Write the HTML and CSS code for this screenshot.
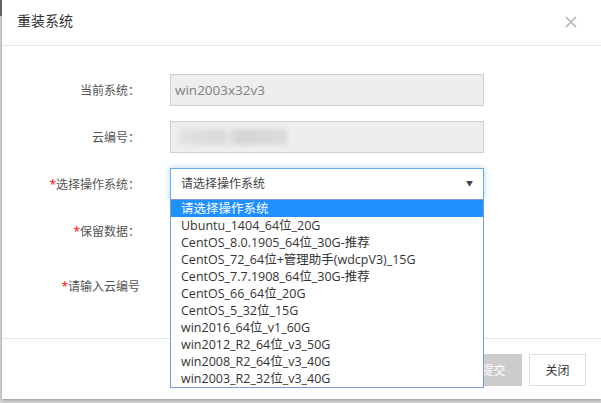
FILE: index.html
```html
<!DOCTYPE html>
<html>
    <head>
        <meta charset="utf-8">
        <title>重装系统</title>
        <link rel="stylesheet" href="styles.css">
    </head>
    <body>
        <div class="modal">
            <div class="modal-header">
                <span class="modal-title">重装系统</span>
                <span class="close">
                    <svg width="12" height="12" viewBox="0 0 12 12"><path d="M1 1L11 11M11 1L1 11" stroke="#b3b3b3" stroke-width="1.6"/></svg>
                </span>
            </div>
            <div class="modal-body">
                <div class="row">
                    <label class="lbl">当前系统：</label>
                    <div class="ctrl input readonly">win2003x32v3</div>
                </div>
                <div class="row">
                    <label class="lbl">云编号：</label>
                    <div class="ctrl input readonly"><span class="blurred"></span></div>
                </div>
                <div class="row">
                    <label class="lbl"><em>*</em>选择操作系统：</label>
                    <div class="select-wrap">
                        <div class="ctrl select focus">请选择操作系统<span class="arrow">&#9660;</span></div>
                        <ul class="dropdown">
                            <li class="active">请选择操作系统</li>
                            <li>Ubuntu_1404_64位_20G</li>
                            <li>CentOS_8.0.1905_64位_30G-推荐</li>
                            <li>CentOS_72_64位+管理助手(wdcpV3)_15G</li>
                            <li>CentOS_7.7.1908_64位_30G-推荐</li>
                            <li>CentOS_66_64位_20G</li>
                            <li>CentOS_5_32位_15G</li>
                            <li>win2016_64位_v1_60G</li>
                            <li>win2012_R2_64位_v3_50G</li>
                            <li>win2008_R2_64位_v3_40G</li>
                            <li>win2003_R2_32位_v3_40G</li>
                        </ul>
                    </div>
                </div>
                <div class="row">
                    <label class="lbl"><em>*</em>保留数据：</label>
                    <div class="ctrl"></div>
                </div>
                <div class="row tall">
                    <label class="lbl"><em>*</em>请输入云编号</label>
                    <div class="ctrl"></div>
                </div>
            </div>
            <div class="modal-footer">
                <button class="btn btn-submit">提交</button>
                <button class="btn btn-close">关闭</button>
            </div>
        </div>
    </body>
</html>
```

FILE: styles.css
```css
html,body{
    margin:0;
    padding:0;
}
body{
    width:601px;
    height:403px;
    overflow:hidden;
    background:linear-gradient(#6a6a6a 0,#6a6a6a 16px,#d4d4d4 16px);
    font-family:"Open Sans","Noto Sans CJK SC",sans-serif;
    color:#333;
}
.modal{
    margin-left:2px;
    height:399px;
    background:#fff;
    box-shadow:0 1px 3px rgba(0,0,0,0.3);
    display:flex;
    flex-direction:column;
}
.modal-header{
    height:46px;
    border-bottom:1px solid #e5e5e5;
    display:flex;
    align-items:center;
    justify-content:space-between;
    padding:0 24px 0 15px;
    box-sizing:border-box;
}
.modal-title{
    font-size:14px;
    color:#333;
    margin-top:-6px;
}
.close{
    display:flex;
    margin-top:-2px;
}
.modal-body{
    flex:1;
    padding-top:28px;
}
.row{
    display:flex;
    align-items:center;
    height:32px;
    margin-bottom:15px;
}
.row.tall{
    height:48px;
}
.lbl{
    width:138px;
    text-align:right;
    font-size:12px;
    color:#555;
    padding-right:30px;
    flex:none;
}
.lbl em{
    font-style:normal;
    color:#f00;
}
.ctrl{
    width:314px;
    height:32px;
    box-sizing:border-box;
    font-size:13.5px;
}
.input{
    border:1px solid #d0d0d0;
    padding:0 4px;
    line-height:30px;
}
.readonly{
    background:#eeeeee;
    color:#808080;
}
.blurred{
    display:inline-block;
    width:108px;
    height:16px;
    margin-top:7px;
    margin-left:4px;
    background:linear-gradient(90deg,#e2e2e2 0,#dadada 40%,#e4e4e4 45%,#d4d4d4 55%,#dcdcdc 100%);
    filter:blur(2px);
}
.select-wrap{
    position:relative;
}
.select{
    border:1px solid #66afe9;
    box-shadow:0 0 6px rgba(102,175,233,0.5);
    padding:0 10px;
    line-height:30px;
    font-size:12px;
    color:#444;
    display:flex;
    justify-content:space-between;
}
.arrow{
    font-size:7px;
    color:#444;
}
.dropdown{
    position:absolute;
    left:0;
    top:31px;
    width:314px;
    box-sizing:border-box;
    margin:0;
    padding:0;
    list-style:none;
    background:#fff;
    border:1px solid #7b9bd6;
    z-index:2;
}
.dropdown li{
    height:17px;
    line-height:17px;
    padding-left:10px;
    font-size:12.5px;
    color:#333;
    white-space:nowrap;
}
.dropdown li.active{
    background:#1e90ff;
    color:#fff;
}
.modal-footer{
    height:61px;
    border-top:1px solid #e5e5e5;
    display:flex;
    justify-content:flex-end;
    align-items:flex-start;
    padding:15px 15px 0 0;
    box-sizing:border-box;
    gap:7px;
}
.btn{
    height:32px;
    width:57px;
    font-family:"Open Sans","Noto Sans CJK SC",sans-serif;
    font-size:12px;
    border:1px solid #ddd;
    background:#fff;
    color:#333;
    padding:0;
}
.btn-submit{
    background:#ccc;
    border-color:#ccc;
    color:#fff;
}
```
